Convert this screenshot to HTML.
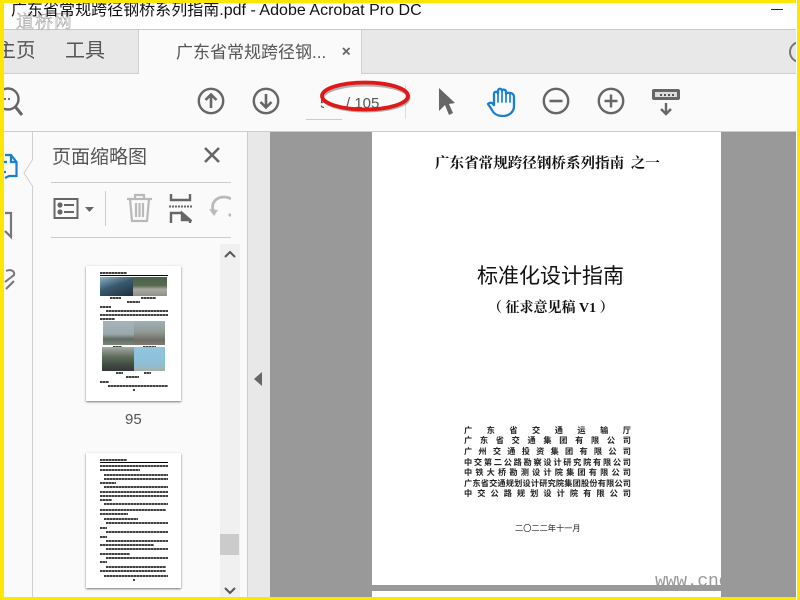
<!DOCTYPE html>
<html><head><meta charset="utf-8"><style>
html,body{margin:0;padding:0;background:#fff}
#r{position:relative;width:800px;height:600px;overflow:hidden;background:#fff;font-family:"Liberation Sans","Noto Sans CJK SC",sans-serif}
#r div,#r span,#r svg{position:absolute}
.t{white-space:nowrap;line-height:1}
.s{font-family:"Liberation Serif","Noto Serif CJK SC",serif;color:#111;font-weight:bold}
.l{height:2px;background:repeating-linear-gradient(90deg,#111 0 2px,#666 2px 3px);opacity:.8}
.co{width:167px;text-align:justify;text-align-last:justify;font-size:8.2px;word-spacing:-1.2px;line-height:10px;height:10px;color:#222;white-space:nowrap;font-family:"Noto Sans CJK SC",sans-serif;font-weight:700}
</style></head><body><div id="r">
<div style="left:0;top:29px;width:800px;height:43px;background:#e8e8e8;border-top:1px solid #c8c8c8;border-bottom:1px solid #cfcfcf"></div>
<div style="left:138px;top:30px;width:224px;height:44px;background:#fafafa;border-left:1px solid #cfcfcf;border-right:1px solid #cfcfcf;box-sizing:border-box"></div>
<div style="left:0;top:74px;width:800px;height:57px;background:#fafafa"></div>
<div class="t" style="left:16px;top:12px;font-size:18px;color:transparent;-webkit-text-stroke:.6px #aaa;letter-spacing:1px;font-family:'Noto Serif CJK SC',serif">道桥网</div>
<div class="t" style="left:11px;top:3px;font-size:16px;color:#111;letter-spacing:.02px">广东省常规跨径钢桥系列指南.pdf - Adobe Acrobat Pro DC</div>
<div style="left:771px;top:9px;width:12px;height:1px;background:#222"></div>
<div class="t" style="left:4px;top:41px;width:30px;overflow:hidden;font-size:20px;color:#555"><span style="position:static;margin-left:-8px">主页</span></div>
<div class="t" style="left:65px;top:41px;font-size:20px;color:#555">工具</div>
<div class="t" style="left:176px;top:44px;font-size:17px;color:#555">广东省常规跨径钢...</div>
<svg style="left:340px;top:45px" width="12" height="12" viewBox="0 0 12 12"><path d="M3 3L9.500 9.500M9.500 3L3 9.500" stroke="#666" stroke-width="1.800"/></svg>
<svg style="left:788px;top:40px" width="9" height="24" viewBox="0 0 9 24"><circle cx="12" cy="12" r="10" fill="none" stroke="#777" stroke-width="2"/></svg>

<svg style="left:0;top:85px" width="26" height="34" viewBox="0 0 26 34"><circle cx="8" cy="14" r="10.500" fill="none" stroke="#666" stroke-width="2.400"/><path d="M15.500 22L22 30" stroke="#666" stroke-width="3"/><circle cx="5" cy="14" r="1.100" fill="#666"/><circle cx="9" cy="14" r="1.100" fill="#666"/></svg>
<svg style="left:197px;top:87px" width="28" height="28" viewBox="0 0 28 28" fill="none" stroke="#666" stroke-width="2.400"><circle cx="14" cy="14" r="12.200"/><path d="M14 21V8M8.500 13L14 7.500L19.500 13" stroke-width="2.600"/></svg>
<svg style="left:252px;top:87px" width="28" height="28" viewBox="0 0 28 28" fill="none" stroke="#666" stroke-width="2.400"><circle cx="14" cy="14" r="12.200"/><path d="M14 7V20M8.500 15L14 20.500L19.500 15" stroke-width="2.600"/></svg>
<div style="left:306px;top:119px;width:36px;height:1px;background:#ccc"></div>
<div class="t" style="left:320px;top:96px;width:4px;overflow:hidden;font-size:15px;color:#555">5</div>
<div class="t" style="left:346px;top:96px;font-size:15px;color:#555">/ 105</div>
<div style="left:405px;top:85px;width:1px;height:34px;background:#ddd"></div>
<svg style="left:315px;top:76px" width="102" height="42" viewBox="0 0 102 42" fill="none"><ellipse cx="51" cy="22" rx="43" ry="13" stroke="#666" stroke-width="3" opacity=".5"/><ellipse cx="50" cy="20" rx="43" ry="13.500" stroke="#e01818" stroke-width="3.800"/></svg>
<svg style="left:438px;top:87px" width="20" height="30" viewBox="0 0 20 30"><path d="M1 1L17 16L11 17L15 26L11 28L7 18L1 24Z" fill="#666"/></svg>
<svg style="left:486px;top:87px" width="30" height="30" viewBox="0 0 30 30" fill="none" stroke="#1b7fd0" stroke-width="2.300" stroke-linecap="round" stroke-linejoin="round"><path d="M2 17C4 15 6 15.500 8 18V7C8 4 12 4 12 7V4C12 1 16 1 16 4V4C16 2 20 2 20 5V7C20 5 28 5 28 10V19C28 25 23 29 17 29C11 29 8 27 6 23Z"/><path d="M12 7V15M16 4V15M20 7V15M24 7V15" stroke-width="1.700"/></svg>
<svg style="left:542px;top:87px" width="28" height="28" viewBox="0 0 28 28" fill="none" stroke="#666" stroke-width="2.400"><circle cx="14" cy="14" r="12.200"/><path d="M7.500 14H20.500" stroke-width="2.600"/></svg>
<svg style="left:597px;top:87px" width="28" height="28" viewBox="0 0 28 28" fill="none" stroke="#666" stroke-width="2.400"><circle cx="14" cy="14" r="12.200"/><path d="M7.500 14H20.500M14 7.500V20.500" stroke-width="2.400"/></svg>
<svg style="left:652px;top:88px" width="28" height="28" viewBox="0 0 28 28"><path d="M2 1H26Q28 1 28 3V10Q28 12 26 12H2Q0 12 0 10V3Q0 1 2 1Z" fill="#666"/><rect x="3" y="4" width="22" height="5" fill="#ddd"/><path d="M8 6h2v2h-2zM12 6h2v2h-2zM16 6h2v2h-2zM20 6h2v2h-2z" fill="#555"/><path d="M14 15V26M9 21L14 26L19 21" fill="none" stroke="#666" stroke-width="2.400"/></svg>

<div style="left:0;top:131px;width:270px;height:469px;background:#fafafa"></div>
<div style="left:0;top:131px;width:800px;height:1px;background:#ccc"></div>
<div style="left:32px;top:132px;width:1px;height:468px;background:#d0d0d0"></div>
<div style="left:247px;top:132px;width:1px;height:468px;background:#ccc"></div>
<div style="left:248px;top:132px;width:22px;height:468px;background:#e8e8e8"></div>
<svg style="left:23px;top:158px" width="12" height="30" viewBox="0 0 12 30"><path d="M10 1L1 15L10 29" fill="#fafafa" stroke="#d0d0d0"/></svg>
<svg style="left:4px;top:153px" width="15" height="30" viewBox="0 0 15 30" fill="none" stroke="#1b7fd0" stroke-width="2.200"><path d="M1 2H7L12.500 9V23H5L1 25M7 2V9H12.500M0 9H3M0 19H2"/></svg>
<svg style="left:4px;top:211px" width="10" height="30" viewBox="0 0 10 30" fill="none" stroke="#777" stroke-width="2.200"><path d="M1 2H7V26L1 20"/></svg>
<svg style="left:4px;top:268px" width="14" height="24" viewBox="0 0 14 24" fill="none" stroke="#777" stroke-width="2"><path d="M2 3C7 1 11 3 10 7L1 14M10 13L2 21"/></svg>
<div class="t" style="left:52px;top:148px;font-size:19px;color:#555;">页面缩略图</div>
<svg style="left:203px;top:146px" width="18" height="18" viewBox="0 0 18 18"><path d="M2 2L16 16M16 2L2 16" stroke="#666" stroke-width="2.600"/></svg>
<div style="left:51px;top:182px;width:180px;height:1px;background:#ccc"></div>
<div style="left:51px;top:237px;width:180px;height:1px;background:#ccc"></div>
<div style="left:105px;top:191px;width:1px;height:35px;background:#ccc"></div>
<svg style="left:53px;top:197px" width="26" height="23" viewBox="0 0 26 23" fill="none" stroke="#666" stroke-width="2"><rect x="1.500" y="2" width="23" height="19"/><path d="M11 8H21M11 15H21"/><circle cx="7" cy="8" r="1.600" fill="#666"/><circle cx="7" cy="15" r="1.600" fill="#666"/></svg>
<svg style="left:85px;top:207px" width="9" height="5" viewBox="0 0 9 5"><path d="M0 0H9L4.500 5Z" fill="#666"/></svg>
<svg style="left:126px;top:193px" width="27" height="30" viewBox="0 0 27 30" fill="none" stroke="#b9b9b9" stroke-width="2.200"><path d="M1 6H26M9 6V2H18V6M4 6L6 28H21L23 6M10 10V24M13.500 10V24M17 10V24"/></svg>
<svg style="left:169px;top:194px" width="23" height="29" viewBox="0 0 23 29" fill="none" stroke="#666" stroke-width="2.400"><path d="M2 0V6H21V0"/><path d="M0 12.500H23" stroke-dasharray="2 1" stroke-width="2"/><path d="M2 29V19H13L21 26V29"/><path d="M13 19L21 26H13Z" fill="#666"/></svg>
<svg style="left:209px;top:194px" width="22" height="29" viewBox="0 0 22 29" fill="none" stroke="#b9b9b9" stroke-width="2.800"><path d="M4 16C2 8 8 3 15 3C19 3 22 5 22 5"/><path d="M0 15L5 22L9 16Z" fill="#b9b9b9" stroke="none"/><path d="M20 20L22 22"/></svg>

<div style="left:220px;top:244px;width:20px;height:356px;background:#f0f0f0"></div>
<div style="left:220px;top:534px;width:19px;height:21px;background:#cbcbcb"></div>
<svg style="left:224px;top:250px" width="12" height="8" viewBox="0 0 12 8"><path d="M1 7L6 2L11 7" fill="none" stroke="#555" stroke-width="2"/></svg>
<svg style="left:224px;top:587px" width="12" height="8" viewBox="0 0 12 8"><path d="M1 1L6 6L11 1" fill="none" stroke="#555" stroke-width="2"/></svg>
<svg style="left:254px;top:372px" width="9" height="14" viewBox="0 0 9 14"><path d="M8 0V14L0 7Z" fill="#666"/></svg>

<div style="left:86px;top:266px;width:95px;height:135px;background:#fff;box-shadow:0 1px 2px #777">
<div class="l" style="left:14px;top:6px;width:27px"></div>
<div style="left:14px;top:9px;width:68px;height:1px;background:#000"></div>
<div style="left:14px;top:11px;width:33px;height:19px;background:linear-gradient(160deg,#8fb4c8 0,#3a5a70 45%,#1e2d3a 100%)"></div>
<div style="left:47px;top:11px;width:34px;height:19px;background:linear-gradient(#4a6048 0,#5a6a52 45%,#a9aaa3 65%,#8f8f88 100%)"></div>
<div class="l" style="left:24px;top:31px;width:11px"></div><div class="l" style="left:55px;top:31px;width:15px"></div><div class="l" style="left:41px;top:35px;width:13px"></div>
<div class="l" style="left:14px;top:40px;width:11px"></div>
<div class="l" style="left:20px;top:44px;width:62px"></div><div class="l" style="left:14px;top:48px;width:68px"></div><div class="l" style="left:14px;top:52px;width:15px"></div>
<div style="left:17px;top:55px;width:31px;height:24px;background:linear-gradient(#a7b4bd 0,#9aa7ab 55%,#5e6a62 75%,#7c8678 100%)"></div>
<div style="left:48px;top:55px;width:31px;height:24px;background:linear-gradient(#9eb0b8 0,#929a94 45%,#6f6d68 80%,#807a72 100%)"></div>
<div class="l" style="left:27px;top:80px;width:9px"></div><div class="l" style="left:57px;top:80px;width:13px"></div>
<div style="left:16px;top:81px;width:32px;height:24px;background:linear-gradient(#a8aba8 0,#5f6f5c 40%,#3f4a40 75%,#33363a 100%)"></div>
<div style="left:48px;top:81px;width:31px;height:24px;background:linear-gradient(#93c4df 0,#8cc0d8 70%,#a6b0aa 100%)"></div>
<div class="l" style="left:30px;top:106px;width:7px"></div><div class="l" style="left:58px;top:106px;width:7px"></div><div class="l" style="left:40px;top:110px;width:13px"></div>
<div class="l" style="left:14px;top:115px;width:9px"></div><div class="l" style="left:22px;top:119px;width:60px"></div><div class="l" style="left:47px;top:123px;width:2px"></div>
</div>
<div class="t" style="left:125px;top:412px;font-size:15px;color:#555">95</div>

<div style="left:86px;top:453px;width:95px;height:135px;background:#fff;box-shadow:0 1px 2px #777">
<div class="l" style="left:14px;top:6px;width:27px"></div>
<div style="left:14px;top:9px;width:68px;height:1px;background:#000"></div>
<div class="l" style="left:14px;top:12px;width:68px"></div><div class="l" style="left:14px;top:16px;width:40px"></div>
<div class="l" style="left:18px;top:21px;width:64px"></div><div class="l" style="left:18px;top:25px;width:64px"></div>
<div class="l" style="left:14px;top:29px;width:16px"></div><div class="l" style="left:18px;top:33px;width:64px"></div><div class="l" style="left:14px;top:38px;width:68px"></div>
<div class="l" style="left:14px;top:42px;width:68px"></div><div class="l" style="left:14px;top:46px;width:12px"></div><div class="l" style="left:18px;top:50px;width:64px"></div>
<div class="l" style="left:14px;top:56px;width:66px"></div><div class="l" style="left:14px;top:60px;width:28px"></div><div class="l" style="left:18px;top:65px;width:34px"></div>
<div class="l" style="left:20px;top:69px;width:62px"></div><div class="l" style="left:14px;top:74px;width:7px"></div><div class="l" style="left:20px;top:78px;width:62px"></div>
<div class="l" style="left:14px;top:83px;width:7px"></div><div class="l" style="left:20px;top:87px;width:62px"></div><div class="l" style="left:14px;top:91px;width:54px"></div>
<div class="l" style="left:20px;top:95px;width:62px"></div><div class="l" style="left:14px;top:100px;width:30px"></div><div class="l" style="left:20px;top:104px;width:62px"></div>
<div class="l" style="left:14px;top:108px;width:7px"></div><div class="l" style="left:20px;top:113px;width:60px"></div><div class="l" style="left:14px;top:117px;width:66px"></div>
<div class="l" style="left:18px;top:122px;width:64px"></div><div class="l" style="left:47px;top:126px;width:2px"></div>
</div>

<div style="left:270px;top:132px;width:530px;height:468px;background:#999"></div>
<div style="left:372px;top:132px;width:349px;height:453px;background:#fff;overflow:hidden">
<div class="t s" style="left:63px;top:25px;font-size:14.500px;letter-spacing:.05px;word-spacing:3px">广东省常规跨径钢桥系列指南 之一</div>
<div class="t" style="left:105px;top:133px;font-size:21px;color:#111;font-family:'Noto Sans CJK SC',sans-serif">标准化设计指南</div>
<div class="t s" style="left:116px;top:170px;font-size:14px;white-space:pre">（ 征求意见稿 V1 ）</div>
<div class="co" style="left:92px;top:293px">广 东 省 交 通 运 输 厅</div>
<div class="co" style="left:92px;top:303px">广 东 省 交 通 集 团 有 限 公 司</div>
<div class="co" style="left:92px;top:314px">广 州 交 通 投 资 集 团 有 限 公 司</div>
<div class="co" style="left:92px;top:325px">中 交 第 二 公 路 勘 察 设 计 研 究 院 有 限 公 司</div>
<div class="co" style="left:92px;top:335px">中 铁 大 桥 勘 测 设 计 院 集 团 有 限 公 司</div>
<div class="co" style="left:92px;top:346px;word-spacing:0">广东省交通规划设计研究院集团股份有限公司</div>
<div class="co" style="left:92px;top:356px">中 交 公 路 规 划 设 计 院 有 限 公 司</div>
<div class="t" style="left:143px;top:392px;font-size:8.200px;color:#222;font-family:'Noto Sans CJK SC',sans-serif">二〇二二年十一月</div>
<div class="t" style="left:283px;top:441px;font-size:18px;color:#999;font-family:'Liberation Mono',monospace;letter-spacing:-.2px">www.cnc</div>
</div>
<div style="left:372px;top:591px;width:349px;height:6px;background:#fff"></div>

<div style="left:0;top:0;width:4px;height:600px;background:#ffe600"></div>
<div style="left:0;top:0;width:800px;height:3px;background:#ffe600"></div>
<div style="left:0;top:597px;width:800px;height:3px;background:#ffe600"></div>
<div style="left:796px;top:0;width:1px;height:600px;background:#fff"></div>
<div style="left:797px;top:0;width:3px;height:600px;background:#ffe600"></div>
</div></body></html>
